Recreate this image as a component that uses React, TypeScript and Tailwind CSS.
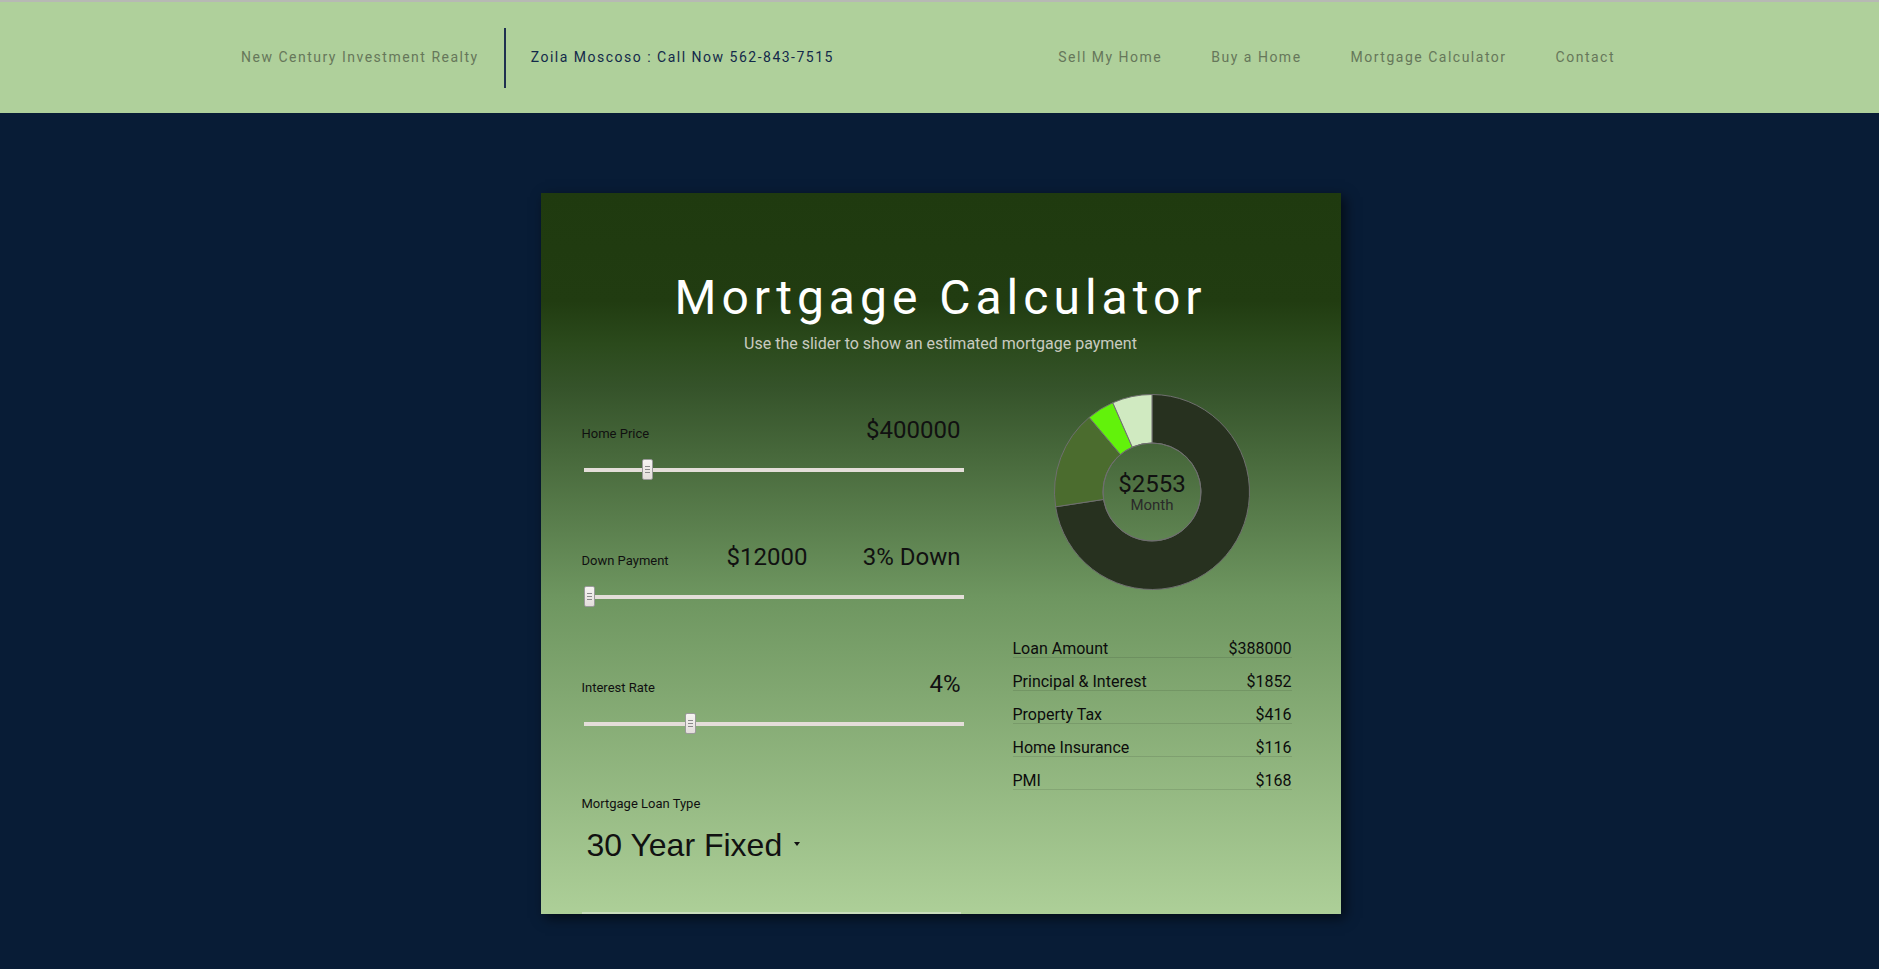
import React from "react";

const FONT = { fontFamily: "Roboto, 'Noto Sans', Arial, sans-serif" };

function Thumb({ left }: { left: number }) {
  return (
    <div
      className="absolute top-0 w-[11px] h-[21px] border border-[#9a9a9a] rounded-[2px] bg-gradient-to-b from-[#f6f4f2] to-[#e3dedb] flex flex-col items-center justify-center gap-[2px]"
      style={{ left }}
    >
      <div className="w-[5px] h-px bg-[#8a8a8a]" />
      <div className="w-[5px] h-px bg-[#8a8a8a]" />
      <div className="w-[5px] h-px bg-[#8a8a8a]" />
    </div>
  );
}

function Slider({ pos }: { pos: number }) {
  return (
    <div className="relative mt-[15px] h-[21px] ml-[2px] w-[380px]">
      <div className="absolute left-0 right-0 top-[9px] h-[4px] bg-[#e4ded9]" />
      <Thumb left={pos} />
    </div>
  );
}

function pt(cx: number, cy: number, r: number, a: number) {
  const rad = (a * Math.PI) / 180;
  return [cx + r * Math.sin(rad), cy - r * Math.cos(rad)];
}

function slice(cx: number, cy: number, ro: number, ri: number, a0: number, a1: number) {
  const large = a1 - a0 > 180 ? 1 : 0;
  const [x0, y0] = pt(cx, cy, ro, a0);
  const [x1, y1] = pt(cx, cy, ro, a1);
  const [x2, y2] = pt(cx, cy, ri, a1);
  const [x3, y3] = pt(cx, cy, ri, a0);
  return `M${x0} ${y0} A${ro} ${ro} 0 ${large} 1 ${x1} ${y1} L${x2} ${y2} A${ri} ${ri} 0 ${large} 0 ${x3} ${y3} Z`;
}

function Donut() {
  const parts = [
    { v: 1852, c: "#27311f" },
    { v: 416, c: "#4b6c2e" },
    { v: 116, c: "#62f20b" },
    { v: 168, c: "#d0eac1" },
  ];
  const total = parts.reduce((s, p) => s + p.v, 0);
  let a = 0;
  const paths = parts.map((p, i) => {
    const a0 = a;
    const a1 = a + (p.v / total) * 360;
    a = a1;
    return <path key={i} d={slice(99, 99, 97.5, 49, a0, a1 - 0.001)} fill={p.c} stroke="#6f6f6f" strokeWidth={1} />;
  });
  return (
    <div className="relative w-[198px] h-[198px]">
      <svg width="198" height="198" viewBox="0 0 198 198">
        {paths}
        <circle cx="99" cy="99" r="49" fill="none" stroke="#6f6f6f" strokeWidth={1} />
      </svg>
      <div className="absolute inset-0 flex flex-col items-center justify-center pt-[1px]">
        <div className="text-[24px] leading-[24px] text-[#111]">$2553</div>
        <div className="text-[15px] leading-[16px] text-[#2a2a2a] mt-[1px]">Month</div>
      </div>
    </div>
  );
}

const rows = [
  ["Loan Amount", "$388000"],
  ["Principal & Interest", "$1852"],
  ["Property Tax", "$416"],
  ["Home Insurance", "$116"],
  ["PMI", "$168"],
];

export default function App() {
  return (
    <div className="min-h-[969px] bg-[#081c36]" style={FONT}>
      <header className="h-[113px] border-t-2 border-[#b7b9b4] bg-[#afd09b] flex items-center justify-between pl-[241px] pr-[264px] tracking-[1.5px] text-[14px]">
        <div className="flex items-center">
          <span className="text-[#66775a]">New Century Investment Realty</span>
          <div className="mx-[25px] w-[2px] h-[60px] bg-[#1f3050]" />
          <span className="text-[#13294a]">Zoila Moscoso : Call Now 562-843-7515</span>
        </div>
        <nav className="flex items-center gap-[49px] text-[#66775a]">
          <span>Sell My Home</span>
          <span>Buy a Home</span>
          <span>Mortgage Calculator</span>
          <span>Contact</span>
        </nav>
      </header>

      <div className="pt-[80px] flex justify-center pl-[2px]">
        <div className="w-[800px] h-[721px] overflow-hidden shadow-[4px_4px_12px_rgba(0,0,0,0.6)] bg-[linear-gradient(180deg,#1f3a0f_0%,#213c11_15%,#2b4a1c_21%,#35532a_27%,#6e9660_56%,#adcf98_100%)] pt-[77px]">
          <h1 className="text-center text-white text-[48px] leading-[56px] tracking-[5px] font-normal">Mortgage Calculator</h1>
          <p className="mt-[8px] text-center text-[#c9cbc0] text-[16px] leading-[20px]">Use the slider to show an estimated mortgage payment</p>

          <div className="flex pl-[41px]">
            <div className="w-[382px] pt-[62px]">
              <div className="flex items-baseline justify-between h-[28px] pr-[3px]">
                <span className="text-[13px] text-[#101010]">Home Price</span>
                <span className="text-[24px] leading-[28px] text-[#111]">$400000</span>
              </div>
              <Slider pos={58} />

              <div className="mt-[63px] flex items-baseline h-[28px] pr-[3px]">
                <span className="text-[13px] text-[#101010] w-[145px]">Down Payment</span>
                <span className="text-[24px] leading-[28px] text-[#111]">$12000</span>
                <span className="ml-auto text-[24px] leading-[28px] text-[#111]">3% Down</span>
              </div>
              <Slider pos={0} />

              <div className="mt-[63px] flex items-baseline justify-between h-[28px] pr-[3px]">
                <span className="text-[13px] text-[#101010]">Interest Rate</span>
                <span className="text-[24px] leading-[28px] text-[#111]">4%</span>
              </div>
              <Slider pos={101} />

              <div className="mt-[62px] text-[13px] leading-[16px] text-[#101010]">Mortgage Loan Type</div>
              <div className="mt-[15px] h-[85px] flex items-start pl-[5px]" style={{ fontFamily: "'Liberation Sans', Arial, sans-serif" }}>
                <span className="text-[32px] leading-[36px] text-[#111]">30 Year Fixed</span>
                <svg width="6" height="4" viewBox="0 0 6 4" className="ml-[12px] mt-[15px]">
                  <path d="M0 0H6L3 4Z" fill="#111" />
                </svg>
              </div>
              <div className="h-[2px] w-[379px] bg-[#c9ddbc]" />
            </div>

            <div className="ml-[49px] w-[279px] pt-[39px] flex flex-col">
              <div className="flex justify-center">
                <Donut />
              </div>
              <div className="mt-[34px]">
                {rows.map(([k, v]) => (
                  <div key={k} className="h-[33px] flex items-end justify-between border-b border-black/10 text-[16px] leading-[16px] text-[#0c0c0c]">
                    <span>{k}</span>
                    <span>{v}</span>
                  </div>
                ))}
              </div>
            </div>
          </div>
        </div>
      </div>
    </div>
  );
}
